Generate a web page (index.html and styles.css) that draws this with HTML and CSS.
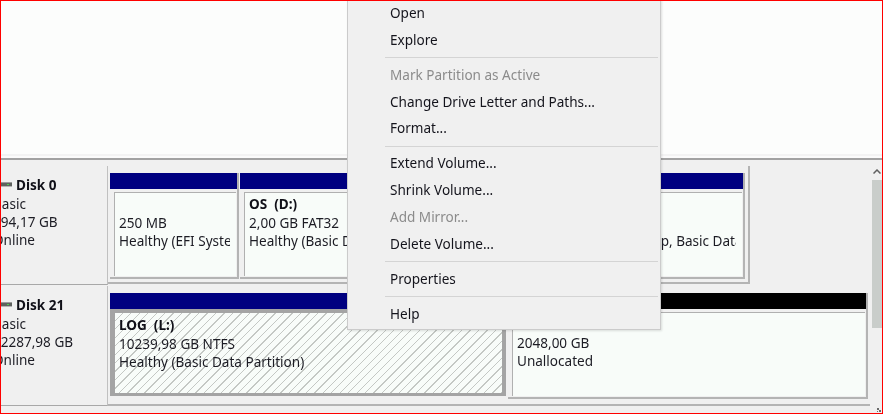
FILE: index.html
```html
<!DOCTYPE html>
<html lang="en">
<head>
<meta charset="utf-8">
<title>Disk Management</title>
<link rel="stylesheet" href="styles.css">
</head>
<body>
<div class="frame">
  <div class="top-pane"></div>
  <div class="bottom-pane">
    <div class="disks">
      <div class="disk-row">
        <div class="disk-label">
          <div class="disk-name">
            <svg class="disk-icon" width="13" height="8" viewBox="0 0 13 8"><rect x="0" y="1" width="12" height="1" fill="#9a9a9a"/><rect x="0" y="2" width="12" height="3" fill="#5f6260"/><rect x="7" y="3" width="2" height="1" fill="#4fd04f"/><rect x="0" y="5" width="12" height="1" fill="#b5b5b5"/></svg>
            <span>Disk 0</span>
          </div>
          <div class="disk-line">Basic</div>
          <div class="disk-line">394,17 GB</div>
          <div class="disk-line">Online</div>
        </div>
        <div class="map map-short">
          <div class="seg seg-efi">
            <div class="seg-head navy"></div>
            <div class="seg-body"><div class="cell">
              <div class="vol-name">&nbsp;</div>
              <div class="vol-line">250 MB</div>
              <div class="vol-line">Healthy (EFI System Partition)</div>
            </div></div>
          </div>
          <div class="seg seg-os">
            <div class="seg-head navy"></div>
            <div class="seg-body"><div class="cell">
              <div class="vol-name">OS&nbsp; (D:)</div>
              <div class="vol-line">2,00 GB FAT32</div>
              <div class="vol-line">Healthy (Basic Data Partition)</div>
            </div></div>
          </div>
          <div class="seg seg-boot">
            <div class="seg-head navy"></div>
            <div class="seg-body"><div class="cell">
              <div class="vol-name">&nbsp;</div>
              <div class="vol-line">&nbsp;</div>
              <div class="vol-line">Healthy (Boot, Page File, Crash Dump, Basic Data Partition)</div>
            </div></div>
          </div>
        </div>
      </div>
      <div class="disk-row disk-row-last">
        <div class="disk-label">
          <div class="disk-name">
            <svg class="disk-icon" width="13" height="8" viewBox="0 0 13 8"><rect x="0" y="1" width="12" height="1" fill="#9a9a9a"/><rect x="0" y="2" width="12" height="3" fill="#5f6260"/><rect x="7" y="3" width="2" height="1" fill="#4fd04f"/><rect x="0" y="5" width="12" height="1" fill="#b5b5b5"/></svg>
            <span>Disk 21</span>
          </div>
          <div class="disk-line">Basic</div>
          <div class="disk-line">12287,98 GB</div>
          <div class="disk-line">Online</div>
        </div>
        <div class="map map-long">
          <div class="seg seg-log">
            <div class="seg-head navy"></div>
            <div class="seg-body selected"><div class="cell hatched">
              <div class="vol-name">LOG&nbsp; (L:)</div>
              <div class="vol-line">10239,98 GB NTFS</div>
              <div class="vol-line">Healthy (Basic Data Partition)</div>
            </div></div>
          </div>
          <div class="seg seg-free">
            <div class="seg-head black"></div>
            <div class="seg-body"><div class="cell">
              <div class="vol-name">&nbsp;</div>
              <div class="vol-line">2048,00 GB</div>
              <div class="vol-line">Unallocated</div>
            </div></div>
          </div>
        </div>
      </div>
    </div>
    <div class="scrollbar">
      <svg class="scroll-arrow" width="8" height="5" viewBox="0 0 8 5"><path d="M0.5 4.5 L4 1 L7.5 4.5" fill="none" stroke="#606060" stroke-width="1.5"/></svg>
      <div class="scroll-thumb"></div>
    </div>
    <svg class="grip" width="5" height="5" viewBox="0 0 5 5"><path d="M0 0h2v2h-2zM2 2h2v2h-2zM0 3h1v1h-1z" fill="#6a6a6a"/></svg>
  </div>
  <ul class="menu">
    <li class="item">Open</li>
    <li class="item">Explore</li>
    <li class="sep"></li>
    <li class="item off">Mark Partition as Active</li>
    <li class="item">Change Drive Letter and Paths...</li>
    <li class="item">Format...</li>
    <li class="sep"></li>
    <li class="item">Extend Volume...</li>
    <li class="item">Shrink Volume...</li>
    <li class="item off">Add Mirror...</li>
    <li class="item">Delete Volume...</li>
    <li class="sep"></li>
    <li class="item">Properties</li>
    <li class="sep"></li>
    <li class="item">Help</li>
  </ul>
</div>
</body>
</html>
```
FILE: styles.css
```css
* { box-sizing: border-box; }
html, body { margin: 0; padding: 0; }
body {
  width: 883px;
  height: 414px;
  overflow: hidden;
  font-family: "Noto Sans", "Open Sans", sans-serif;
  font-size: 13.55px;
  color: #1c1c24;
}
.frame {
  position: relative;
  width: 883px;
  height: 414px;
  border: 1px solid #ff0000;
  overflow: hidden;
  display: flex;
  flex-direction: column;
  background: #f0f0f0;
}
.top-pane {
  height: 159px;
  flex: none;
  background: linear-gradient(#fcfdfc 0 153px, #f3f3f3 153px 155px, #fbfbfb 155px);
  border-bottom: 2px solid #a2a2a2;
}
.bottom-pane {
  position: relative;
  flex: 1;
  display: flex;
  min-height: 0;
  filter: blur(0.3px);
}
.disks {
  flex: 1;
  padding-top: 6px;
  display: flex;
  flex-direction: column;
  gap: 1px;
}
.disk-row { display: flex; height: 119px; align-items: flex-start; }
.disk-row-last { height: 120px; }
.disk-label {
  width: 107px;
  height: 100%;
  flex: none;
  padding: 9px 0 0 0;
  overflow: hidden;
  border-bottom: 1px solid #a8a8a8;
  border-right: 1px solid #c0c0c0;
  white-space: nowrap;
  line-height: 18.2px;
}
.disk-name { display: flex; align-items: center; height: 20px; font-weight: 700; color: #101018; }
.disk-icon { flex: none; margin-right: 3px; margin-left: -1px; }
.disk-line { margin-left: -8px; height: 18.2px; }
.map {
  display: flex;
  gap: 1px;
  height: 100%;
  padding: 7px 3px 0 2px;
  border-bottom: 2px solid #b4b4b4;
}
.map-short { width: 642px; height: 118px; border-right: 2px solid #b4b4b4; }
.map-long { flex: 1; padding-right: 2px; }
.seg { display: flex; flex-direction: column; height: 106px; min-width: 0; }
.seg-efi { width: 129px; flex: none; }
.seg-os { width: 184px; flex: none; }
.seg-boot { flex: 1; min-width: 0; }
.seg-log { width: 396px; flex: none; margin-right: 1px; }
.seg-free { flex: 1; }
.seg-head { height: 16px; flex: none; border-right: 2px solid #b0b0b0; }
.navy { background: #000080; }
.black { background: #000000; }
.seg-body {
  flex: 1;
  min-height: 0;
  padding: 3px 1px 1px 4px;
  border-right: 2px solid #b4b4b4;
  border-bottom: 2px solid #b4b4b4;
  display: flex;
}
.seg-body.selected {
  padding: 4px 4px 3px 5px;
  background: #a4a4a4;
  border: 0;
  height: 87px;
  flex: none;
}
.cell {
  flex: 1;
  min-width: 0;
  background: #f8fcf9;
  border-left: 1px solid #b0b0b0;
  border-top: 1px solid #b0b0b0;
  padding: 2px 6px 0 4px;
  overflow: hidden;
  white-space: nowrap;
  line-height: 18.7px;
}
.vol-line { overflow: hidden; }
.seg-boot .cell { padding-left: 2px; }
.cell.hatched {
  border: 0;
  padding: 3px 3px 0 4px;
  background: repeating-linear-gradient(135deg, #f8fcf9 0 5px, #c4c8c4 5px 6px);
}
.vol-name { font-weight: 700; color: #101018; }
.menu {
  position: absolute;
  left: 346px;
  top: -2px;
  width: 314px;
  margin: 0;
  padding: 0 0 1px;
  list-style: none;
  background: #f0f0f0;
  border: 1px solid #cbcbcb;
  box-shadow: 1px 1px 2px rgba(0, 0, 0, 0.12);
  filter: blur(0.3px);
}
.item {
  height: 26.7px;
  line-height: 26.7px;
  padding-left: 42px;
  color: #14141c;
}
.item.off { color: #8b8b8b; }
.sep {
  height: 1px;
  margin: 3.75px 2px 3.75px 37px;
  background: #d4d4d4;
}
.scrollbar {
  width: 12px;
  flex: none;
  padding-left: 2px;
  display: flex;
  flex-direction: column;
  align-items: center;
}
.scroll-arrow { margin-top: 9px; flex: none; }
.scroll-thumb {
  width: 10px;
  height: 148px;
  margin-top: 6px;
  background: #c9cdca;
  flex: none;
}
.grip { position: absolute; right: 0; bottom: 0; }
```
